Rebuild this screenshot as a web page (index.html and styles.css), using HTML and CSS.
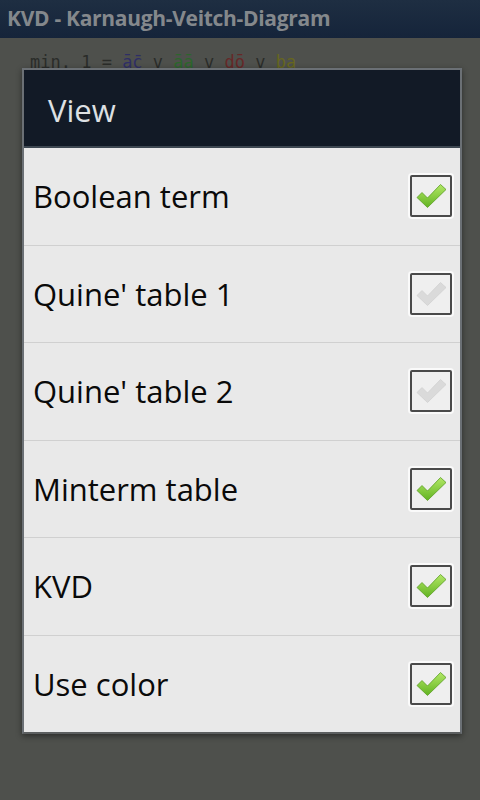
FILE: index.html
```html
<!DOCTYPE html>
<html lang="en">
<head>
  <meta charset="UTF-8" />
  <meta name="viewport" content="width=device-width, initial-scale=1" />
  <title>KVD - Karnaugh-Veitch-Diagram</title>
  <link rel="stylesheet" href="styles.css">
</head>
<body>

  <!-- App title bar (dimmed behind the dialog) -->
  <div class="titlebar">KVD - Karnaugh-Veitch-Diagram</div>
  <div class="formula">min. 1 = <span class="t-blue">āc̄</span> v <span class="t-green">āā</span> v <span class="t-red">dō</span> v <span class="t-yellow">ba</span></div>

  <!-- View dialog -->
  <div class="dialog">
    <div class="dialog-head">View</div>
    <ul class="options">
      <li class="option"><span>Boolean term</span><span class="box on"></span></li>
      <li class="option"><span>Quine' table 1</span><span class="box"></span></li>
      <li class="option"><span>Quine' table 2</span><span class="box"></span></li>
      <li class="option"><span>Minterm table</span><span class="box on"></span></li>
      <li class="option"><span>KVD</span><span class="box on"></span></li>
      <li class="option"><span>Use color</span><span class="box on"></span></li>
    </ul>
  </div>

  <svg width="0" height="0" class="defs">
    <defs>
      <linearGradient id="green" x1="0" y1="0" x2="0" y2="1">
        <stop offset="0" stop-color="#b2e866"/>
        <stop offset="1" stop-color="#62b322"/>
      </linearGradient>
    </defs>
  </svg>

  <script>
    // draw the tick inside each box
    document.querySelectorAll(".box").forEach(function (b) {
      var on = b.classList.contains("on");
      var fill = on ? "url(#green)" : "#dadada";
      var edge = on ? "#5a9e22" : "#d0d0d0";
      b.innerHTML = '<svg viewBox="0 0 38 38" width="38" height="38"><path d="M5 20.5 L10 15.5 L15.5 21 L28.5 7.5 L34 12.5 L15.5 30.5 Z" fill="' + fill + '" stroke="' + edge + '" stroke-width="0.8" stroke-linejoin="round"/></svg>';
    });
  </script>
</body>
</html>
```

FILE: styles.css
```css
body {
  margin: 0;
  width: 480px;
  height: 800px;
  background: #4e504c;
  font-family: "Open Sans", "Noto Sans", sans-serif;
  overflow: hidden;
  position: relative;
}
.titlebar {
  height: 38px;
  line-height: 37px;
  padding-left: 7px;
  background: linear-gradient(#1e2e42, #15243a);
  color: #84888c;
  font-weight: bold;
  font-size: 21px;
  letter-spacing: -0.3px;
}
.formula {
  font-family: "DejaVu Sans Mono", monospace;
  font-size: 17px;
  color: #2a2c29;
  padding: 14px 0 0 30px;
}
.t-blue { color: #2e2e66; }
.t-green { color: #2c662c; }
.t-red { color: #662828; }
.t-yellow { color: #66661e; }

.dialog {
  position: absolute;
  left: 22px;
  top: 68px;
  width: 436px;
  border: 2px solid #6b7075;
  border-bottom-color: #5c5f60;
  background: #e9e9e9;
  box-shadow: 0 2px 6px rgba(0, 0, 0, 0.45);
}
.dialog-head {
  height: 76px;
  background: #121a26;
  color: #dde0e3;
  font-size: 31px;
  line-height: 80px;
  padding-left: 24px;
  border-bottom: 2px solid #3e4852;
}
.options {
  list-style: none;
  margin: 0;
  padding: 0;
}
.option {
  height: 96.5px;
  display: flex;
  align-items: center;
  justify-content: space-between;
  padding: 0 8px 0 9px;
  font-size: 31px;
  color: #0a0a0a;
  border-top: 1px solid #d0d0d0;
}
.option:first-child {
  border-top: none;
}
.box {
  width: 38px;
  height: 38px;
  border: 2px solid #4a4a4a;
  border-radius: 2px;
  background: #efefef;
  box-shadow: 0 0 0 2px #fafafa;
  display: flex;
}
.defs {
  position: absolute;
}
```
